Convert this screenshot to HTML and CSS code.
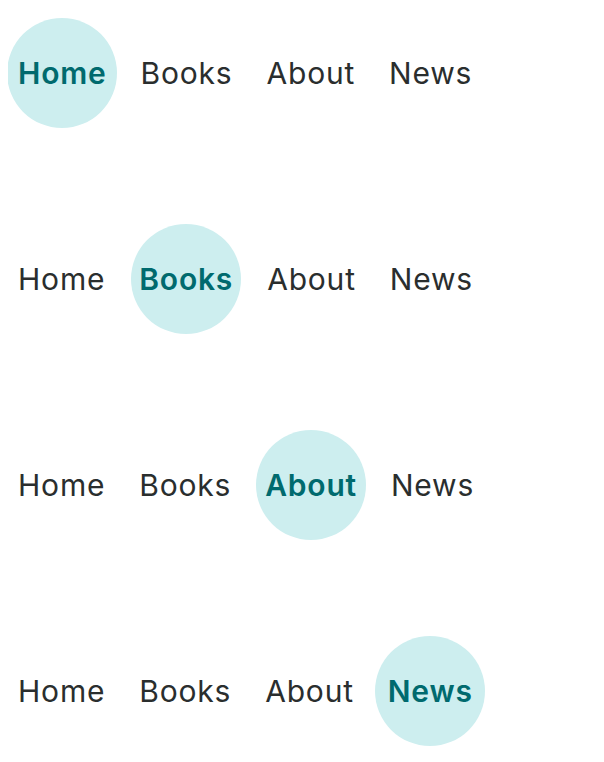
FILE: index.html
```html
<!DOCTYPE html>
<html>
<head>
<meta charset="utf-8">
<link rel="stylesheet" href="styles.css">
</head>
<body>
<nav class="nav">
  <a class="item active">Home</a>
  <a class="item">Books</a>
  <a class="item">About</a>
  <a class="item">News</a>
</nav>
<nav class="nav">
  <a class="item">Home</a>
  <a class="item active">Books</a>
  <a class="item">About</a>
  <a class="item">News</a>
</nav>
<nav class="nav">
  <a class="item">Home</a>
  <a class="item">Books</a>
  <a class="item active">About</a>
  <a class="item">News</a>
</nav>
<nav class="nav">
  <a class="item">Home</a>
  <a class="item">Books</a>
  <a class="item">About</a>
  <a class="item active">News</a>
</nav>
</body>
</html>
```
FILE: styles.css
```css
body {
  margin: 8px;
  background: #ffffff;
  font-family: Inter, "Noto Sans", sans-serif;
}
.nav {
  display: flex;
  align-items: center;
  gap: 34px;
  height: 130px;
  padding-left: 10px;
  margin-bottom: 76px;
}
.nav:last-child {
  margin-bottom: 0;
}
.item {
  position: relative;
  font-size: 30px;
  letter-spacing: 0.8px;
  color: #2a2e2e;
  line-height: 1;
  z-index: 0;
}
.item.active {
  font-weight: 600;
  color: #006a6e;
}
.item.active::before {
  content: "";
  position: absolute;
  left: 50%;
  top: 50%;
  width: 110px;
  height: 110px;
  margin: -55px 0 0 -55px;
  border-radius: 50%;
  background: #cdeeef;
  z-index: -1;
}
```
